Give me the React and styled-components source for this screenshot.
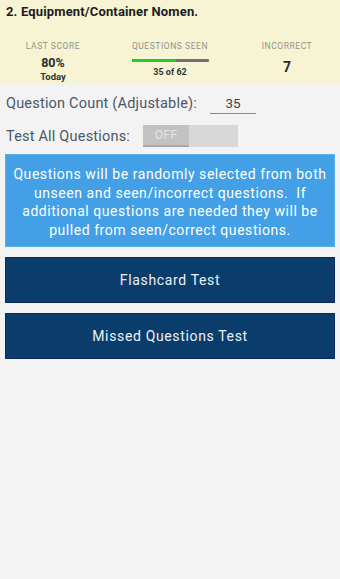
import React, { useState } from 'react'
import styled, { createGlobalStyle } from 'styled-components'

const Global = createGlobalStyle`
  html, body {
    margin: 0;
    padding: 0;
    background: #f3f3f3;
    font-family: Roboto, 'Liberation Sans', sans-serif;
  }
`

const Page = styled.div`
  width: 340px;
  min-height: 579px;
  background: #f3f3f3;
`

const Header = styled.header`
  background: #f6f4d3;
  height: 84px;
  box-sizing: border-box;
  padding-top: 4px;
`

const Title = styled.h1`
  margin: 0;
  padding: 0 6px;
  font-size: 13px;
  font-weight: bold;
  letter-spacing: 0.15px;
  color: #1c1c1c;
  line-height: 16px;
`

const Stats = styled.div`
  display: grid;
  grid-template-columns: repeat(3, 117px);
  justify-content: center;
  margin-top: 21px;
`

const Stat = styled.div`
  display: flex;
  flex-direction: column;
  align-items: center;
`

const StatLabel = styled.div`
  font-size: 8.5px;
  color: #92928a;
  text-transform: uppercase;
  line-height: 11px;
  letter-spacing: 0.55px;
`

const StatValue = styled.div`
  font-size: ${p => p.$big ? '14px' : '12.5px'};
  font-weight: bold;
  color: #2a2a2a;
  line-height: 14px;
  margin-top: ${p => p.$big ? '8px' : '4px'};
`

const StatSub = styled.div`
  font-size: ${p => p.$size || '9.5px'};
  font-weight: bold;
  color: #333;
  line-height: 12px;
  margin-top: ${p => p.$gap || '1px'};
`

const Bar = styled.div`
  width: 77px;
  height: 3px;
  background: #707078;
  border-radius: 1px;
  margin-top: 7px;
  overflow: hidden;
`

const BarFill = styled.div`
  height: 100%;
  background: #22cc22;
`

const Body = styled.div`
  padding: 0 5px;
`

const Row = styled.div`
  display: flex;
  align-items: center;
  height: ${p => p.$h};
  padding-left: 1px;
`

const Label = styled.span`
  font-size: 14.5px;
  letter-spacing: 0.2px;
  color: #4a5866;
`

const CountInput = styled.div`
  width: 46px;
  margin-left: 13px;
  text-align: center;
  font-size: 13.5px;
  color: #444;
  border-bottom: 1.5px solid #3aa0d8;
  padding-bottom: 2px;
  margin-top: 3px;
`

const Toggle = styled.button`
  display: flex;
  width: 95px;
  height: 22px;
  padding: 0;
  margin-left: 13px;
  border: none;
  background: #d8d8d8;
  cursor: pointer;
`

const Thumb = styled.span`
  width: 46px;
  height: 22px;
  box-sizing: border-box;
  background: #c2c2c2;
  border-bottom: 2px solid #a8a8a8;
  color: #e6e6e6;
  font-size: 12px;
  letter-spacing: 0.4px;
  font-family: Roboto, sans-serif;
  display: flex;
  align-items: center;
  justify-content: center;
  margin-left: ${p => p.$on ? '49px' : '0'};
`

const Info = styled.div`
  background: #43a0e6;
  border: 1px solid #5aaee9;
  color: #fff;
  font-size: 14px;
  letter-spacing: 0.55px;
  line-height: 18.5px;
  text-align: center;
  padding: 10px 6px 7px;
  margin-top: 4px;
`

const ActionButton = styled.button`
  display: block;
  width: 100%;
  height: 46px;
  margin-top: ${p => p.$gap};
  background: #0a3d6b;
  border: 1px solid #0c2a66;
  color: #eef0f6;
  font-family: Roboto, 'Liberation Sans', sans-serif;
  font-size: 14px;
  letter-spacing: 0.65px;
  cursor: pointer;
`

export default function App() {
  const [all, setAll] = useState(false)
  const seen = 35
  const total = 62
  return (
    <Page>
      <Global />
      <Header>
        <Title>2. Equipment/Container Nomen.</Title>
        <Stats>
          <Stat>
            <StatLabel>Last Score</StatLabel>
            <StatValue>80%</StatValue>
            <StatSub>Today</StatSub>
          </Stat>
          <Stat>
            <StatLabel>Questions Seen</StatLabel>
            <Bar>
              <BarFill style={{ width: `${(seen / total) * 100 * 1.02}%` }} />
            </Bar>
            <StatSub $gap="4px" $size="9px">{seen} of {total}</StatSub>
          </Stat>
          <Stat>
            <StatLabel>Incorrect</StatLabel>
            <StatValue $big>7</StatValue>
          </Stat>
        </Stats>
      </Header>
      <Body>
        <Row $h="38px">
          <Label>Question Count (Adjustable):</Label>
          <CountInput>35</CountInput>
        </Row>
        <Row $h="28px">
          <Label>Test All Questions:</Label>
          <Toggle onClick={() => setAll(!all)}>
            <Thumb $on={all}>{all ? 'ON' : 'OFF'}</Thumb>
          </Toggle>
        </Row>
        <Info>
          Questions will be randomly selected from both unseen and seen/incorrect questions.&nbsp; If additional questions are needed they will be pulled from seen/correct questions.
        </Info>
        <ActionButton $gap="10px">Flashcard Test</ActionButton>
        <ActionButton $gap="10px">Missed Questions Test</ActionButton>
      </Body>
    </Page>
  )
}
